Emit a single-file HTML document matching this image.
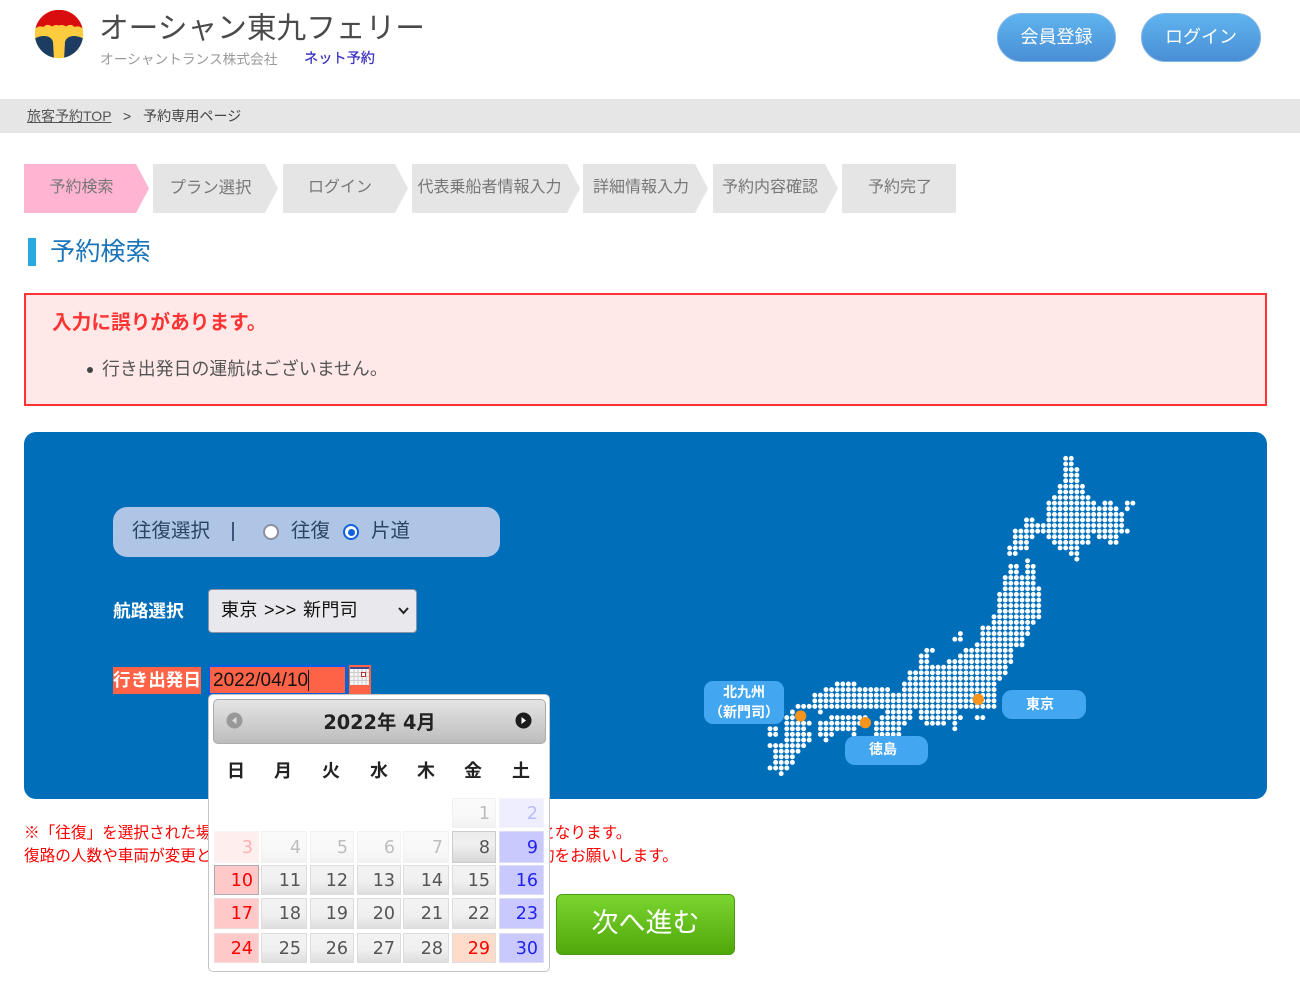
<!DOCTYPE html>
<html lang="ja"><head><meta charset="utf-8"><title>オーシャン東九フェリー</title>
<style>
html,body{margin:0;padding:0;background:#fff}
body{width:1300px;height:1001px;position:relative;overflow:hidden;font-family:"Liberation Sans","Noto Sans CJK JP",sans-serif;color:#444}
.a{position:absolute;white-space:nowrap}
.btn{position:absolute;top:13px;height:47px;border:1px solid #7fb6e6;border-radius:25px;background:linear-gradient(#5fb4ef,#4a8ed5);color:#fff;font-size:18px;line-height:47px;text-align:center;box-sizing:content-box}
.st{position:absolute;top:164px;height:49px;line-height:48px;font-size:16px;color:#777;text-align:center;background:#e5e5e5;clip-path:polygon(0 0,calc(100% - 13px) 0,100% 50%,calc(100% - 13px) 100%,0 100%)}
.d{position:absolute;box-sizing:border-box;border:1px solid #ddd;background:linear-gradient(#f3f3f3 0,#f0f0f0 55%,#dedede 100%);color:#555;text-align:right;padding-right:5px;font:17.5px/31px "DejaVu Sans",sans-serif}
.off{opacity:.38}
.sat{background:#c9c9fd;border-color:#dcdcf5;color:#2222ee}
.sun{background:#ffc9c9;border-color:#eedcdc;color:#f00}
.c1{left:214px;width:45px}.c2{left:261px;width:46px}.c3{left:310px;width:44px}.c4{left:357px;width:44px}.c5{left:403px;width:46px}.c6{left:452px;width:44px}.c7{left:499px;width:45px}
.r1{top:798px;height:30px}.r2{top:831px;height:32px;line-height:32px}.r3{top:865px;height:30px}.r4{top:898px;height:31px}.r5{top:933px;height:30px}
.w{position:absolute;top:759px;width:40px;text-align:center;font-size:18px;font-weight:700;color:#222;line-height:24px}
.lb{position:absolute;background:#42a6f1;color:#fff;text-align:center;font-size:14px;font-weight:700}
</style></head><body>

<svg class="a" style="left:34.700px;top:10px" width="50" height="50" viewBox="35 10 50 50">
<defs><clipPath id="lc"><circle cx="59" cy="34" r="24.2"/></clipPath></defs>
<g clip-path="url(#lc)">
<rect x="34" y="9" width="50" height="52" fill="#fdcb3e"/>
<path d="M34 9H84V30Q80 25 74.500 27Q71 23 66 26.500Q62.500 24 59 25.500Q55.500 24 52 26.500Q47 23 43.500 27Q38 25 34 30Z" fill="#d90d0d"/>
<path d="M34 39C40 35 51 34 53 42L54 60H34Z" fill="#1c3c62"/>
<path d="M84 39C78 35 67 34 65 42L64 60H84Z" fill="#1c3c62"/>
</g></svg>
<div class="a" style="left:99px;top:8px;font-size:29.700px;line-height:42px;color:#4a4a4a">オーシャン東九フェリー</div>
<div class="a" style="left:100px;top:50px;font-size:13.700px;line-height:20px;color:#9a9a9a">オーシャントランス株式会社</div>
<div class="a" style="left:304px;top:49px;font-size:14.200px;line-height:21px;color:#3a30c0;-webkit-text-stroke:.25px #3a30c0">ネット予約</div>
<div class="btn" style="left:997px;width:117px">会員登録</div>
<div class="btn" style="left:1141px;width:118px">ログイン</div>

<div class="a" style="left:0;top:99px;width:1300px;height:34px;background:#e6e6e6"></div>
<div class="a" style="left:27px;top:106px;font-size:14px;line-height:21px;color:#555;text-decoration:underline">旅客予約TOP</div>
<div class="a" style="left:123px;top:106px;font-size:14px;line-height:21px;color:#444">&gt;</div>
<div class="a" style="left:143px;top:106px;font-size:14.100px;line-height:21px;color:#444">予約専用ページ</div>

<div class="st" style="left:24px;width:125px;background:#ffb4d1;padding-right:0"><span style="margin-right:10px;display:inline-block">予約検索</span></div>
<div class="st" style="left:153px;width:125px"><span style="margin-right:10px;display:inline-block;font-size:16.400px">プラン選択</span></div>
<div class="st" style="left:283px;width:125px"><span style="margin-right:11px;display:inline-block">ログイン</span></div>
<div class="st" style="left:412px;width:168px"><span style="margin-right:13px;display:inline-block">代表乗船者情報入力</span></div>
<div class="st" style="left:583px;width:125px"><span style="margin-right:9px;display:inline-block">詳細情報入力</span></div>
<div class="st" style="left:713px;width:125px"><span style="margin-right:11px;display:inline-block">予約内容確認</span></div>
<div class="st" style="left:842px;width:114px;clip-path:none"><span style="margin-left:2px">予約完了</span></div>

<div class="a" style="left:28px;top:238px;width:8px;height:28px;background:#29a9e1"></div>
<div class="a" style="left:50px;top:234px;font-size:25.200px;line-height:36px;color:#1a74ba">予約検索</div>

<div class="a" style="left:24px;top:293px;width:1243px;height:113px;box-sizing:border-box;border:2px solid #f33;background:#ffe8e8"></div>
<div class="a" style="left:52px;top:309px;font-size:19.700px;font-weight:700;line-height:29px;color:#f33">入力に誤りがあります。</div>
<div class="a" style="left:87px;top:367px;width:6px;height:6px;border-radius:50%;background:#444"></div>
<div class="a" style="left:102px;top:356px;font-size:17.900px;line-height:26px;color:#555">行き出発日の運航はございません。</div>

<div class="a" style="left:24px;top:432px;width:1243px;height:367px;border-radius:12px;background:#006eb8"></div>

<svg class="a" style="left:690px;top:440px" width="460" height="350" viewBox="0 0 1380 1050">
<g fill="none" stroke="#fff" stroke-width=".88" stroke-linecap="round" stroke-dasharray="0 1">
<path transform="translate(1127 55) scale(16.8)" d="M0 0H1.100M0 1H1.100M0 2H2.100M0 3H2.100M0 4H2.100M-1 5H3.100M-1 6H3.100M-2 7H4.100M-3 8H5.100M7 8H8.100M11 8H12.100M-3 9H9.100M11 9H11.100M-3 10H10.100M-7 11H-5.900M-3 11H10.100M-7 12H10.100M-9 13H11.100M-9 14H-5.900M-3 14H4.100M6 14H9.100M-9 15H-6.900M-2 15H4.100M8 15H9.100M-10 16H-6.900M-1 16H2.100M-10 17H-8.900M1 17H2.100M2 18H2.100"/>
<path transform="translate(1130.400 60) scale(16.8)" d="M-7 18H-6.900M-10 19H-8.900M-7 19H-5.900M-10 20H-8.900M-7 20H-5.900M-11 21H-5.900M-11 22H-5.900M-11 23H-4.900M-12 24H-4.900M-12 25H-4.900M-12 26H-4.900M-12 27H-4.900M-13 28H-4.900M-13 29H-5.900M-15 30H-6.900M-19 31H-18.900M-15 31H-6.900M-20 32H-18.900M-15 32H-7.900M-16 33H-7.900M-25 34H-23.900M-18 34H-9.900M-26 35H-24.900M-19 35H-9.900M-26 36H-24.900M-21 36H-9.900M-26 37H-10.900M-28 38H-10.900M-28 39H-11.900M-41 40H-37.900M-29 40H-12.900M-43 41H-31.900M-29 41H-12.900M-45 42H-12.900M-45 43H-12.900M-48 44H-12.900M-49 45H-48.900M-44 45H-43.900M-32 45H-27.900M-26 45H-19.900M-50 46H-47.900M-42 46H-35.900M-33 46H-27.900M-26 46H-18.900M-16 46H-14.900M-50 47H-45.900M-44 47H-36.900M-34 47H-28.900M-25 47H-21.900M-20 47H-19.900M-53 48H-51.900M-50 48H-46.900M-44 48H-37.900M-34 48H-29.900M-20 48H-19.900M-53 49H-51.900M-50 49H-45.900M-44 49H-41.900M-38 49H-37.900M-34 49H-29.900M-50 50H-45.900M-43 50H-42.900M-53 51H-46.900M-52 52H-47.900M-52 53H-48.900M-52 54H-48.900M-53 55H-49.900M-51 56H-50.900"/>
</g>
<circle cx="332" cy="828" r="17" fill="#f7941d"/><circle cx="526" cy="848" r="17" fill="#f7941d"/><circle cx="865" cy="778" r="17" fill="#f7941d"/>
</svg>
<div class="lb" style="left:704px;top:681px;width:80px;height:43px;border-radius:9px;line-height:20px;padding-top:1px;box-sizing:border-box">北九州<br>（新門司）</div>
<div class="lb" style="left:1002px;top:690px;width:84px;height:29px;border-radius:10px;line-height:28px;padding-right:8px;box-sizing:border-box">東京</div>
<div class="lb" style="left:845px;top:736px;width:83px;height:29px;border-radius:10px;line-height:27px;padding-right:7px;box-sizing:border-box">徳島</div>

<div class="a" style="left:113px;top:507px;width:387px;height:50px;border-radius:14px;background:#aec5e6"></div>
<div class="a" style="left:132px;top:517px;font-size:19.500px;line-height:28px;color:#2c4463">往復選択</div>
<div class="a" style="left:232px;top:522px;width:1.500px;height:19px;background:#3a5578"></div>
<div class="a" style="left:263px;top:524px;width:16px;height:16px;box-sizing:border-box;border-radius:50%;background:#fff;border:2px solid #8f8f9d"></div>
<div class="a" style="left:291px;top:517px;font-size:19.500px;line-height:28px;color:#2c4463">往復</div>
<div class="a" style="left:343px;top:524px;width:16px;height:16px;box-sizing:border-box;border-radius:50%;background:#fff;border:2.500px solid #0f62dc"></div>
<div class="a" style="left:347.500px;top:528.500px;width:7px;height:7px;border-radius:50%;background:#0f62dc"></div>
<div class="a" style="left:371px;top:517px;font-size:19.500px;line-height:28px;color:#2c4463">片道</div>

<div class="a" style="left:113px;top:598px;font-size:17.700px;font-weight:700;line-height:26px;color:#fff">航路選択</div>
<div class="a" style="left:208px;top:589px;width:209px;height:44px;box-sizing:border-box;background:#e9e9ed;border:1px solid #8d94a6;border-radius:4px"></div>
<div class="a" style="left:221px;top:597px;font-size:18px;line-height:26px;color:#111;letter-spacing:.35px;word-spacing:1px">東京 &gt;&gt;&gt; 新門司</div>
<svg class="a" style="left:397px;top:606px" width="13" height="10" viewBox="0 0 13 10"><path d="M2 2L6.500 7L11 2" fill="none" stroke="#222" stroke-width="2"/></svg>

<div class="a" style="left:113px;top:667px;width:88px;height:27px;background:#ff6347;color:#fff;font-size:17.600px;font-weight:700;line-height:26px">行き出発日</div>
<div class="a" style="left:208px;top:665px;width:139px;height:30px;box-sizing:border-box;background:#ff6347;border:2px solid #0a5fe0;outline:0"></div>
<div class="a" style="left:213px;top:668px;font-size:19px;line-height:26px;color:#111">2022/04/10</div>
<div class="a" style="left:308px;top:670px;width:1px;height:21px;background:#111"></div>
<div class="a" style="left:349px;top:665px;width:22px;height:30px;background:#ff6347"></div>
<svg class="a" style="left:350px;top:667px" width="19" height="18" viewBox="0 0 19 18"><rect width="19" height="18" fill="#f4f4f4"/><rect width="19" height="2" fill="#3a4a90"/><path d="M0 5.500H19M0 9.500H19M0 13.500H19M4 2V18M8 2V18M12 2V18M16 2V18" stroke="#ccc" stroke-width="1"/><rect x="11.500" y="5.500" width="4" height="4" fill="#fff" stroke="#a33"/></svg>

<div class="a" style="left:24px;top:822px;font-size:15.630px;line-height:23px;color:#f00">※「往復」を選択された場合、復路の出発日は往路の出発日以降の日付けとなります。</div>
<div class="a" style="left:24px;top:845px;font-size:15.630px;line-height:23px;color:#f00">復路の人数や車両が変更となる場合には、往路と復路を分けて別々にご予約をお願いします。</div>

<div class="a" style="left:556px;top:894px;width:179px;height:61px;box-sizing:border-box;border:1px solid #4b9a12;border-radius:6px;background:linear-gradient(#7ad52f,#50a70a);color:#fff;font-size:27px;line-height:57px;text-align:center">次へ進む</div>

<div class="a" style="left:208px;top:694px;width:342px;height:278px;box-sizing:border-box;background:#fff;border:1px solid #c4c4c4;border-radius:5px"></div>
<div class="a" style="left:213px;top:699px;width:333px;height:45px;box-sizing:border-box;border:1px solid #aaa;border-radius:5px;background:linear-gradient(#e4e4e4,#bdbdbd)"></div>
<div class="a" style="left:213px;top:709px;width:333px;text-align:center;font:700 19.300px/28px 'DejaVu Sans','Noto Sans CJK JP',sans-serif;color:#222">2022年 4月</div>
<svg class="a" style="left:226px;top:712px" width="306" height="18" viewBox="0 0 306 18">
<circle cx="8.500" cy="8.500" r="8" fill="#999"/><path d="M10.500 5V12L6 8.500Z" fill="#ddd"/>
<circle cx="297.500" cy="8.500" r="8" fill="#1c1c1c"/><path d="M295.500 5V12L300 8.500Z" fill="#fff"/></svg>
<div class="w" style="left:216px">日</div><div class="w" style="left:263px">月</div><div class="w" style="left:311px">火</div><div class="w" style="left:359px">水</div><div class="w" style="left:406px">木</div><div class="w" style="left:453px">金</div><div class="w" style="left:501px">土</div>

<div class="d c6 r1 off">1</div><div class="d c7 r1 sat off" style="opacity:.3">2</div>
<div class="d c1 r2 sun off" style="opacity:.3">3</div><div class="d c2 r2 off">4</div><div class="d c3 r2 off">5</div><div class="d c4 r2 off">6</div><div class="d c5 r2 off">7</div><div class="d c6 r2" style="background:linear-gradient(#ececec,#f0f0f0 40%,#d8d8d8);border-color:#ccc">8</div><div class="d c7 r2 sat">9</div>
<div class="d c1 r3 sun" style="border:1.500px solid #aaa">10</div><div class="d c2 r3">11</div><div class="d c3 r3">12</div><div class="d c4 r3">13</div><div class="d c5 r3">14</div><div class="d c6 r3">15</div><div class="d c7 r3 sat">16</div>
<div class="d c1 r4 sun">17</div><div class="d c2 r4">18</div><div class="d c3 r4">19</div><div class="d c4 r4">20</div><div class="d c5 r4">21</div><div class="d c6 r4">22</div><div class="d c7 r4 sat">23</div>
<div class="d c1 r5 sun">24</div><div class="d c2 r5">25</div><div class="d c3 r5">26</div><div class="d c4 r5">27</div><div class="d c5 r5">28</div><div class="d c6 r5" style="background:#ffdcc9;color:#f00">29</div><div class="d c7 r5 sat">30</div>

</body></html>
